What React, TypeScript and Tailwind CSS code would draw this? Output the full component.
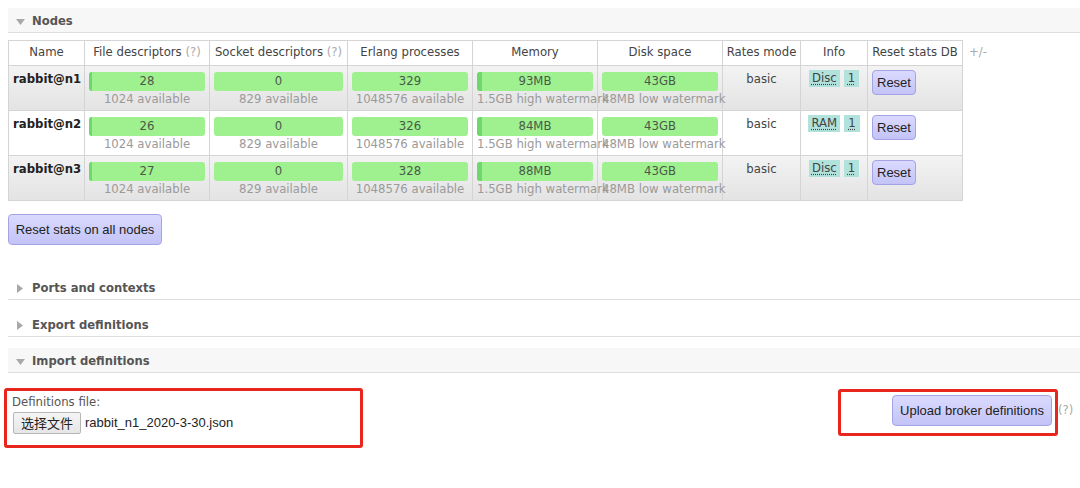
import React from 'react';

type Node = {
  name: string;
  fd: string;
  sockets: string;
  procs: string;
  mem: string;
  memPct: number;
  disk: string;
  type: string;
};

const nodes: Node[] = [
  { name: 'rabbit@n1', fd: '28', sockets: '0', procs: '329', mem: '93MB', memPct: 5, disk: '43GB', type: 'Disc' },
  { name: 'rabbit@n2', fd: '26', sockets: '0', procs: '326', mem: '84MB', memPct: 5, disk: '43GB', type: 'RAM' },
  { name: 'rabbit@n3', fd: '27', sockets: '0', procs: '328', mem: '88MB', memPct: 5, disk: '43GB', type: 'Disc' },
];

function Bar({ value, sub, fill = 2 }: { value: string; sub: string; fill?: number }) {
  return (
    <div>
      <div className="relative h-[19px] rounded-[3px] bg-[#9ff08f] overflow-hidden">
        <div className="absolute left-0 top-0 bottom-0 bg-[#6fd86a]" style={{ width: fill }} />
        <div className="relative text-center leading-[19px] text-[#4a5a4a]">{value}</div>
      </div>
      <div className="text-center whitespace-nowrap leading-[16px] text-[#9a9a9a]">{sub}</div>
    </div>
  );
}

function Section({ title, open, shaded }: { title: string; open?: boolean; shaded?: boolean }) {
  return (
    <div className={`h-[25px] pt-[3px] flex items-center border-b border-[#dedede] ${shaded ? 'bg-[#f7f7f7]' : ''}`}>
      <span className="w-[24px] flex justify-center">
        {open ? (
          <svg width="9" height="6" viewBox="0 0 9 6"><path d="M0 0h9L4.5 6z" fill="#a8a8a8" /></svg>
        ) : (
          <svg width="6" height="9" viewBox="0 0 6 9"><path d="M0 0v9l6-4.5z" fill="#a8a8a8" /></svg>
        )}
      </span>
      <span className="font-bold text-[11.6px] text-[#555]">{title}</span>
    </div>
  );
}

const btn =
  "font-['Liberation_Sans',Arial,sans-serif] text-[13px] text-[#222] rounded-[4px] border border-[#a3a3e6] bg-gradient-to-b from-[#dadaff] to-[#c3c3f7]";

export default function App() {
  return (
    <div className="w-[1080px] h-[488px] overflow-hidden bg-white pt-2 pl-2 font-['DejaVu_Sans',Verdana,sans-serif] text-[11.7px] text-[#444]">
      <Section title="Nodes" open shaded />

      <div className="flex items-start mt-[7px]">
        <table className="table-fixed border-collapse w-[954px]">
          <thead>
            <tr className="h-[25px] bg-white">
              <th className="w-[76px] font-normal border border-[#d4d4d4]">Name</th>
              <th className="w-[125px] font-normal border border-[#d4d4d4] whitespace-nowrap">
                File descriptors <span className="text-[#aaa]">(?)</span>
              </th>
              <th className="w-[138px] font-normal border border-[#d4d4d4] whitespace-nowrap">
                Socket descriptors <span className="text-[#aaa]">(?)</span>
              </th>
              <th className="w-[125px] font-normal border border-[#d4d4d4]">Erlang processes</th>
              <th className="w-[125px] font-normal border border-[#d4d4d4]">Memory</th>
              <th className="w-[125px] font-normal border border-[#d4d4d4]">Disk space</th>
              <th className="w-[78px] font-normal border border-[#d4d4d4] whitespace-nowrap">Rates mode</th>
              <th className="w-[67px] font-normal border border-[#d4d4d4]">Info</th>
              <th className="w-[95px] font-normal border border-[#d4d4d4] whitespace-nowrap">Reset stats DB</th>
            </tr>
          </thead>
          <tbody>
            {nodes.map((n, i) => (
              <tr
                key={n.name}
                className={`h-[45px] align-top ${i % 2 === 0 ? 'bg-gradient-to-b from-[#f3f3f3] to-[#e3e3e3]' : 'bg-white'}`}
              >
                <td className="border border-[#d4d4d4] px-1 pt-[5px] font-bold text-[#222] whitespace-nowrap">{n.name}</td>
                <td className="border border-[#d4d4d4] px-1 pt-[6px]">
                  <Bar value={n.fd} sub="1024 available" fill={3} />
                </td>
                <td className="border border-[#d4d4d4] px-1 pt-[6px]">
                  <Bar value={n.sockets} sub="829 available" fill={0} />
                </td>
                <td className="border border-[#d4d4d4] px-1 pt-[6px]">
                  <Bar value={n.procs} sub="1048576 available" fill={0} />
                </td>
                <td className="border border-[#d4d4d4] px-1 pt-[6px]">
                  <Bar value={n.mem} sub="1.5GB high watermark" fill={n.memPct} />
                </td>
                <td className="border border-[#d4d4d4] px-1 pt-[6px]">
                  <Bar value={n.disk} sub="48MB low watermark" fill={0} />
                </td>
                <td className="border border-[#d4d4d4] px-1 pt-[5px] text-center">basic</td>
                <td className="border border-[#d4d4d4] px-1 pt-[4px]">
                  <div className="flex gap-[4px] justify-center">
                    <span className="bg-[#b2e2dc] px-[3px] leading-[17px] underline decoration-dotted underline-offset-2">{n.type}</span>
                    <span className="bg-[#b2e2dc] px-[4px] leading-[17px] underline decoration-dotted underline-offset-2">1</span>
                  </div>
                </td>
                <td className="border border-[#d4d4d4] px-1 pt-[4px]">
                  <button className={`${btn} h-[25px] px-[4px]`}>Reset</button>
                </td>
              </tr>
            ))}
          </tbody>
        </table>
        <span className="ml-[6px] mt-[4px] text-[#aaa]">+/-</span>
      </div>

      <button className={`${btn} mt-[13px] h-[31px] w-[154px]`}>Reset stats on all nodes</button>

      <div className="mt-[30px]">
        <Section title="Ports and contexts" />
      </div>
      <div className="mt-[12px]">
        <Section title="Export definitions" />
      </div>
      <div className="mt-[11px]">
        <Section title="Import definitions" open shaded />
      </div>

      <div className="flex items-start mt-[15px] -ml-1">
        <div className="w-[359px] h-[60px] border-[3px] border-[#e8261e] rounded-[3px] pl-[5px] pt-[4px]">
          <div className="text-[#555] leading-[15px]">Definitions file:</div>
          <div className="flex items-center mt-[2px] ml-[1px]">
            <span className="h-[22px] px-[7px] flex items-center border border-[#b5b5b5] rounded-[2px] bg-gradient-to-b from-[#f5f5f5] to-[#e6e6e6] text-[13px] text-[#222] font-['Noto_Sans_CJK_SC',sans-serif]">
              选择文件
            </span>
            <span className="ml-[4px] text-[13px] text-[#222] font-['Liberation_Sans',Arial,sans-serif]">
              rabbit_n1_2020-3-30.json
            </span>
          </div>
        </div>
        <div className="ml-[475px] mt-[1px] w-[220px] h-[47px] border-[3px] border-[#e8261e] rounded-[3px] pl-[51px] pt-[3px]">
          <button className={`${btn} h-[31px] w-[160px]`}>Upload broker definitions</button>
        </div>
        <span className="mt-[14px] text-[#aaa]">(?)</span>
      </div>
    </div>
  );
}
